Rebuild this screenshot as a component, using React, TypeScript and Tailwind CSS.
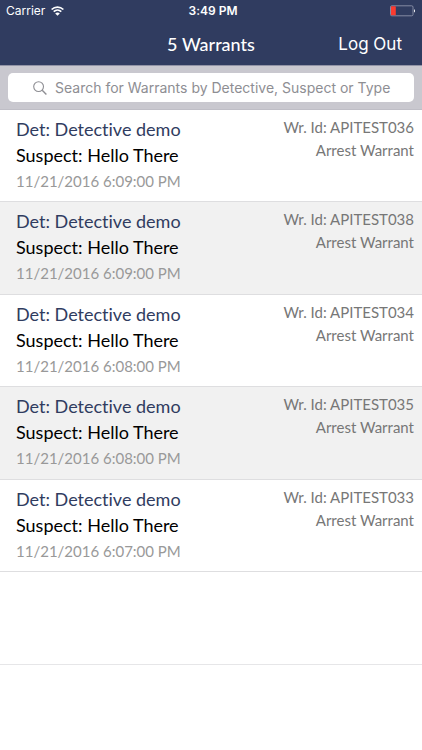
import React from "react";

type Warrant = { id: string; detective: string; suspect: string; date: string; kind: string };

const warrants: Warrant[] = [
  { id: "APITEST036", detective: "Detective demo", suspect: "Hello There", date: "11/21/2016 6:09:00 PM", kind: "Arrest Warrant" },
  { id: "APITEST038", detective: "Detective demo", suspect: "Hello There", date: "11/21/2016 6:09:00 PM", kind: "Arrest Warrant" },
  { id: "APITEST034", detective: "Detective demo", suspect: "Hello There", date: "11/21/2016 6:08:00 PM", kind: "Arrest Warrant" },
  { id: "APITEST035", detective: "Detective demo", suspect: "Hello There", date: "11/21/2016 6:08:00 PM", kind: "Arrest Warrant" },
  { id: "APITEST033", detective: "Detective demo", suspect: "Hello There", date: "11/21/2016 6:07:00 PM", kind: "Arrest Warrant" },
];

function WifiIcon() {
  return (
    <svg width="13" height="10" viewBox="0 0 13 10" fill="none" stroke="#fff" aria-hidden="true">
      <path d="M0.6 3.5C4 0.2 9 0.2 12.4 3.5" strokeWidth="1.7" />
      <path d="M2.7 5.7C4.9 3.6 8.1 3.6 10.3 5.7" strokeWidth="1.6" />
      <path d="M6.5 9.7L4.2 7.5C5.5 6.3 7.5 6.3 8.8 7.5Z" fill="#fff" stroke="none" />
    </svg>
  );
}

function BatteryIcon() {
  return (
    <svg width="26" height="12" viewBox="0 0 26 12" aria-hidden="true">
      <rect x="0.5" y="0.8" width="22.5" height="10" rx="1.3" fill="none" stroke="#8d93aa" strokeWidth="0.9" />
      <rect x="1" y="1.3" width="4.8" height="9" rx="0.6" fill="#fb3b30" />
      <path d="M24 4.2C25.3 4.4 25.3 7.2 24 7.4Z" fill="#fff" />
    </svg>
  );
}

function SearchIcon() {
  return (
    <svg width="14" height="14" viewBox="0 0 14 14" fill="none" stroke="#8e8e93" aria-hidden="true">
      <circle cx="5.6" cy="5.6" r="4.9" strokeWidth="1.1" />
      <path d="M9.2 9.2L13.4 13.4" strokeWidth="1.4" />
    </svg>
  );
}

function WarrantRow({ warrant }: { warrant: Warrant }) {
  return (
    <li className="flex min-h-[92px] justify-between border-b border-[#dedee0] pr-2 pl-4 pt-1.5 even:min-h-[93px] even:bg-[#f1f1f1]">
      <div>
        <h2 className="text-[18px] leading-[26px] text-[#303c60]">Det: {warrant.detective}</h2>
        <p className="text-[18px] leading-[26px] text-black">Suspect: {warrant.suspect}</p>
        <p className="text-[15px] leading-[26px] text-[#999]">{warrant.date}</p>
      </div>
      <div className="text-right text-[15px] leading-[23px] text-[#777]">
        <p>Wr. Id: {warrant.id}</p>
        <p>{warrant.kind}</p>
      </div>
    </li>
  );
}

export default function App() {
  return (
    <div className="min-h-screen bg-white font-['Lato',sans-serif] [font-variant-ligatures:none]">
      <header className="bg-[#303c60] text-white">
        <div className="grid h-[22px] grid-cols-[1fr_auto_1fr] items-center px-1.5 font-['Inter',sans-serif] text-[12px] leading-[22px]">
          <span className="flex items-center gap-1.5">
            Carrier
            <WifiIcon />
          </span>
          <span className="pl-1 font-semibold">3:49 PM</span>
          <span className="flex justify-end">
            <BatteryIcon />
          </span>
        </div>
        <div className="grid h-[43px] grid-cols-[1fr_auto_1fr] items-center pr-5">
          <h1 className="col-start-2 pl-5 text-[18px] leading-6 font-medium">5 Warrants</h1>
          <button type="button" className="justify-self-end font-['Inter',sans-serif] text-[17px] leading-6">
            Log Out
          </button>
        </div>
      </header>
      <div className="border-t border-b border-t-[#9294a6] border-b-[#bfbec6] bg-[#c9c8cf] px-2 pt-[7px] pb-[7px]">
        <label className="flex h-[29px] items-center gap-2 rounded-[5px] bg-white pl-[25px]">
          <SearchIcon />
          <input
            type="search"
            aria-label="Search warrants"
            placeholder="Search for Warrants by Detective, Suspect or Type"
            className="min-w-0 flex-1 bg-transparent font-['Inter',sans-serif] text-[14px] leading-5 text-black outline-none placeholder:text-[#8e8e93]"
          />
        </label>
      </div>
      <main>
        <ul>
          {warrants.map((warrant) => (
            <WarrantRow key={warrant.id} warrant={warrant} />
          ))}
          <li aria-hidden="true" className="min-h-[93px] border-b border-[#e6e6e8]" />
        </ul>
      </main>
    </div>
  );
}
